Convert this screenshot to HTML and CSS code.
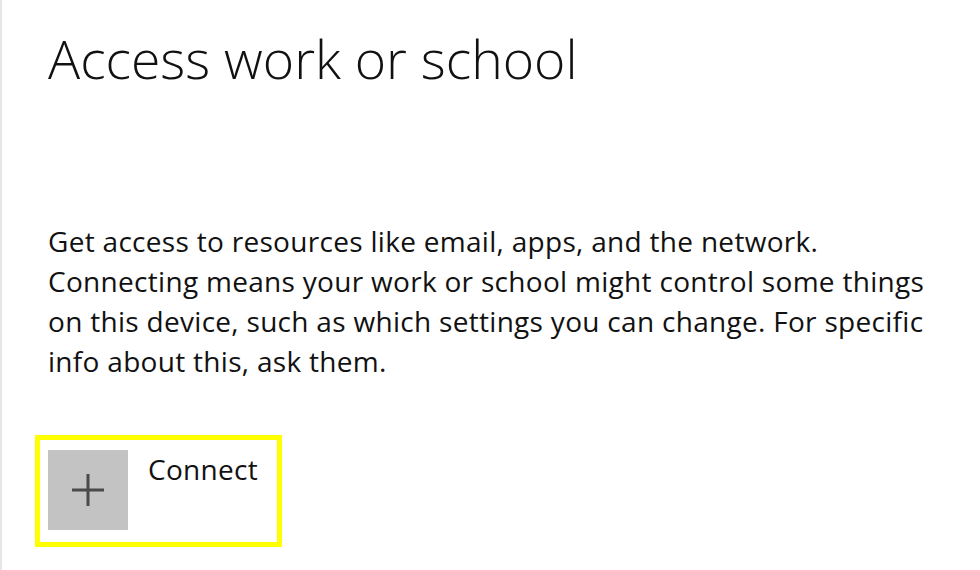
FILE: index.html
```html
<!DOCTYPE html>
<html lang="en">
<head>
<meta charset="utf-8">
<title>Access work or school</title>
<link rel="stylesheet" href="styles.css">
</head>
<body>
<main class="page">
  <h1 class="title">Access work or school</h1>
  <p class="desc">Get access to resources like email, apps, and the network.<br>Connecting means your work or school might control some things<br>on this device, such as which settings you can change. For specific<br>info about this, ask them.</p>
  <div class="connect-wrap">
    <button class="connect" type="button">
      <span class="connect-icon">
        <svg width="34" height="34" viewBox="0 0 34 34" aria-hidden="true"><path d="M17 1V33M1 17H33" stroke="#4a4a4a" stroke-width="3" fill="none"/></svg>
      </span>
      <span class="connect-label">Connect</span>
    </button>
  </div>
</main>
</body>
</html>
```
FILE: styles.css
```css
html, body {
  margin: 0;
  padding: 0;
  background: #ffffff;
}
.page {
  box-sizing: border-box;
  height: 570px;
  border-left: 2px solid #e6e6e6;
  padding: 21px 0 0 46px;
  font-family: "Open Sans", "Noto Sans", sans-serif;
  color: #000000;
}
.title {
  margin: 0;
  font-size: 53.5px;
  font-weight: 300;
  line-height: 76px;
  color: #111111;
}
.desc {
  margin: 124px 0 0 0;
  font-size: 28px;
  line-height: 40px;
  letter-spacing: 0.3px;
  font-weight: 400;
  color: #111111;
}
.connect-wrap {
  margin: 54px 0 0 -13px;
}
.connect {
  display: flex;
  align-items: flex-start;
  gap: 20px;
  box-sizing: border-box;
  width: 247px;
  height: 112px;
  padding: 10px 0 0 8px;
  border: 5px solid #ffff00;
  background: #ffffff;
  font: inherit;
  color: #111111;
  cursor: pointer;
}
.connect-icon {
  display: flex;
  align-items: center;
  justify-content: center;
  width: 80px;
  height: 80px;
  background: #c3c3c3;
  flex: none;
}
.connect-label {
  font-size: 28px;
  line-height: 34px;
  letter-spacing: 0.3px;
  margin-top: 2px;
}
```
